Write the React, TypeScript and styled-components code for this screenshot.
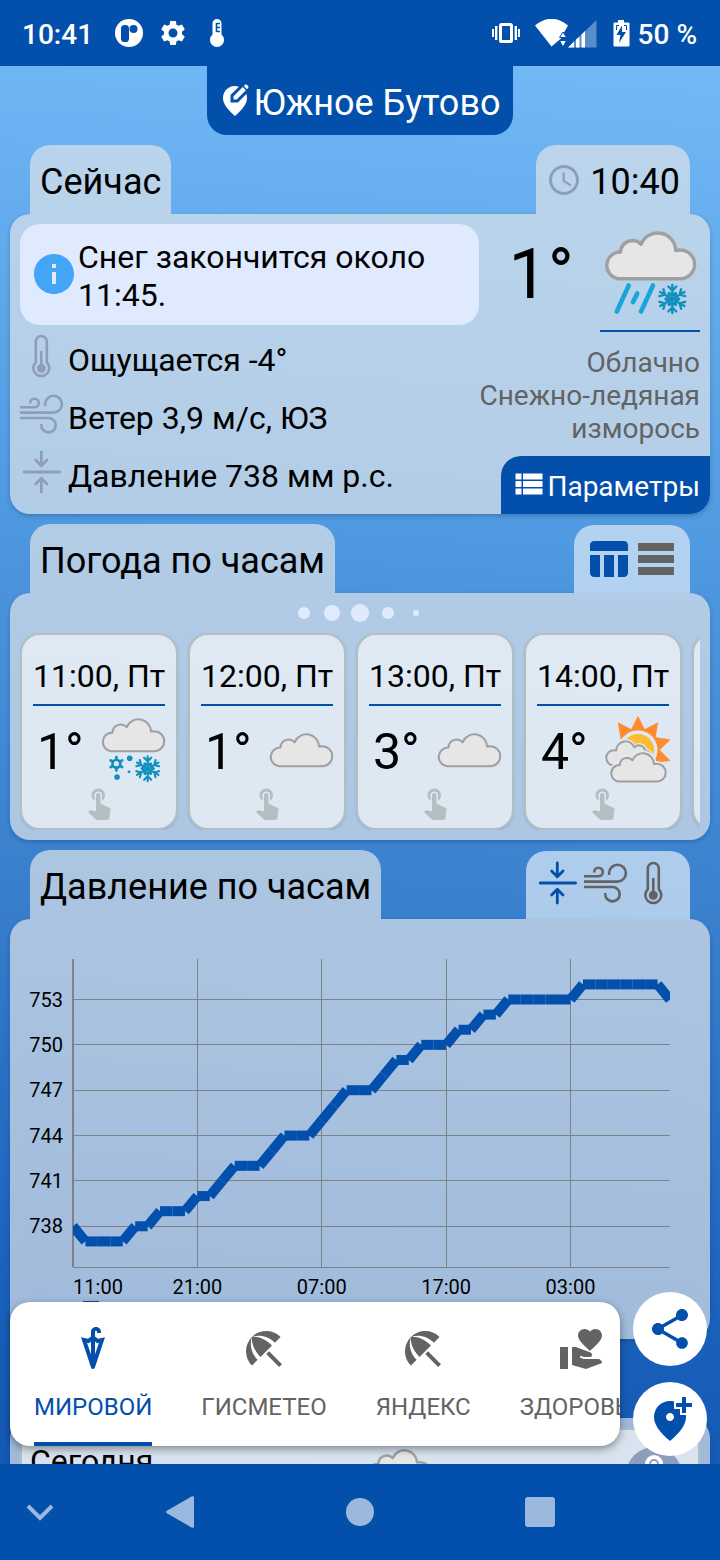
import React, { useState } from "react";
import styled, { createGlobalStyle } from "styled-components";
import {
  MdAccessTime,
  MdAddLocationAlt,
  MdBeachAccess,
  MdEditLocationAlt,
  MdInfo,
  MdSettings,
  MdShare,
  MdTableChart,
  MdTouchApp,
  MdUmbrella,
  MdViewList,
  MdVolunteerActivism,
} from "react-icons/md";

const color = {
  primary: "#034fac",
  card: "rgba(221, 227, 234, 0.7)",
  toggle: "rgba(215, 229, 246, 0.74)",
  inner: "rgba(250, 252, 252, 0.62)",
  notice: "#dfeaff",
  info: "#42a5f5",
  muted: "#8f9dbd",
  grey: "#636363",
  line: "#7d8287",
  nav: "#9bb9de",
};

const GlobalStyle = createGlobalStyle`
  *, *::before, *::after { box-sizing: border-box; }
  html, body { margin: 0; height: 100%; }
  body { font-family: Roboto, "Noto Sans", sans-serif; color: #000; background: ${color.primary}; }
  button { font: inherit; color: inherit; border: 0; padding: 0; margin: 0; background: none; cursor: pointer; }
  h2, p, ul { margin: 0; padding: 0; font-weight: 400; }
  ul { list-style: none; }
  svg { display: block; flex-shrink: 0; }
`;

/* ---------- page frame ---------- */

const Screen = styled.div`
  height: 100vh;
  display: flex;
  flex-direction: column;
  overflow: hidden;
`;

const StatusBar = styled.header`
  flex: none;
  height: 66px;
  padding: 2px 23px 0 22px;
  display: flex;
  align-items: center;
  justify-content: space-between;
  background: ${color.primary};
  color: #fff;
  font-size: 28px;
  font-weight: 500;
`;

const StatusGroup = styled.div<{ $gap: number }>`
  display: flex;
  align-items: center;
  gap: ${(p) => p.$gap}px;
`;

const Viewport = styled.div`
  position: relative;
  flex: 1;
  min-height: 0;
  overflow: hidden;
  background: linear-gradient(184deg, #72b9f6 0%, #4f99e0 34%, #3a81ce 58%, #1960bb 88%, #1459b2 100%);
`;

const Content = styled.main`
  display: flex;
  flex-direction: column;
  align-items: stretch;
  gap: 10px;
  padding: 0 10px;
`;

const LocationButton = styled.button`
  align-self: center;
  height: 69px;
  padding: 4px 12px 0 10px;
  display: flex;
  align-items: center;
  border-radius: 0 0 20px 20px;
  background: ${color.primary};
  color: #fff;
  font-size: 36px;

  svg {
    margin-bottom: 4px;
  }
`;

/* ---------- sections ---------- */

const SectionHead = styled.div`
  display: flex;
  justify-content: space-between;
  align-items: flex-end;
  padding: 0 20px;
`;

const SectionTitle = styled.h2`
  height: 69px;
  padding: 4px 10px 0;
  display: flex;
  align-items: center;
  border-radius: 20px 20px 0 0;
  background: ${color.card};
  font-size: 36px;
`;

const TimeTab = styled(SectionTitle).attrs({ as: "div" })`
  gap: 8px;

  svg {
    margin-bottom: 4px;
  }
`;

const ToggleTab = styled.div`
  height: 68px;
  padding: 10px;
  display: flex;
  border-radius: 20px 20px 0 0;
  background: ${color.toggle};
`;

const ToggleButton = styled.button<{ $active: boolean }>`
  display: flex;
  align-items: flex-start;
  width: 48px;
  height: 48px;
  color: ${(p) => (p.$active ? color.primary : color.grey)};
`;

const Card = styled.div`
  border-radius: 20px;
  background: ${color.card};
  box-shadow: 0 2px 4px rgba(20, 50, 90, 0.3);
`;

/* ---------- current weather ---------- */

const NowCard = styled(Card)`
  display: flex;
  justify-content: space-between;
  min-height: 300px;
`;

const NowLeft = styled.div`
  width: 460px;
  margin: 10px 0 0 10px;
`;

const Notice = styled.p`
  min-height: 101px;
  padding: 2px 10px 0;
  display: flex;
  align-items: center;
  border-radius: 20px;
  background: ${color.notice};
  font-size: 32px;
  line-height: 38px;

  svg {
    margin-bottom: 4px;
    color: ${color.info};
  }
`;

const FactRow = styled.li`
  height: 58px;
  padding-top: 9px;
  display: flex;
  gap: 4px;
  color: ${color.muted};
  font-size: 32px;
  line-height: 52px;

  span {
    color: #000;
  }
`;

const NowRight = styled.div`
  flex: 1;
  display: flex;
  flex-direction: column;
  align-items: flex-end;
`;

const NowTemp = styled.div`
  display: flex;
  gap: 26px;
  padding: 10px 10px 0 0;
  font-size: 70px;
  line-height: 100px;
`;

const NowIcon = styled.div`
  height: 108px;
  border-bottom: 2px solid ${color.primary};
`;

const NowText = styled.p`
  flex: 1;
  padding: 14px 10px 0 0;
  text-align: right;
  color: ${color.grey};
  font-size: 28px;
  line-height: 33px;
  white-space: pre;
`;

const ParamsButton = styled.button`
  height: 58px;
  padding: 2px 10px 0;
  display: flex;
  align-items: center;
  border-radius: 20px 0 20px 0;
  background: ${color.primary};
  color: #fff;
  font-size: 28px;

  svg {
    margin-bottom: 4px;
  }
`;

/* ---------- hourly weather ---------- */

const HoursCard = styled(Card)`
  display: flex;
  flex-direction: column;
  gap: 10px;
  padding: 10px;
`;

const HourList = styled.ul`
  display: flex;
  gap: 10px;
  overflow: hidden;
`;

const HourCard = styled.button`
  width: 158px;
  height: 197px;
  padding: 20px 11px 0;
  display: flex;
  flex-direction: column;
  align-items: center;
  border: 2px solid #b1bec2;
  border-radius: 20px;
  background: ${color.inner};
  box-shadow: 0 1px 2px rgba(20, 50, 90, 0.2);
  color: #000;
`;

const HourTime = styled.span`
  width: 100%;
  height: 51px;
  border-bottom: 2px solid ${color.primary};
  font-size: 32px;
  line-height: 42px;
  white-space: nowrap;
`;

const HourTemp = styled.span`
  align-self: stretch;
  height: 78px;
  padding-left: 4px;
  display: flex;
  justify-content: space-between;
  font-size: 50px;
  line-height: 92px;

  svg {
    margin: 7px -3px 0 0;
  }
`;

const TouchIcon = styled(MdTouchApp)`
  color: #b3bfc3;
`;

/* ---------- chart ---------- */

const ChartCard = styled(Card)`
  padding: 10px;

  svg {
    width: 100%;
    height: auto;
  }
  text {
    font-size: 20px;
  }
`;

/* ---------- daily weather ---------- */

const DayCard = styled(Card)`
  padding: 10px;
`;

const DayRow = styled.div`
  display: grid;
  grid-template-columns: 21fr 20fr;
  padding: 14px 16px 20px 8px;
  border: 2px solid #b1bec2;
  border-radius: 4px;
  background: ${color.inner};
  font-size: 32px;
  line-height: 34px;
`;

const DayIcons = styled.div`
  display: flex;
  align-items: center;
  justify-content: space-between;
`;

/* ---------- floating dock ---------- */

const Dock = styled.nav`
  position: absolute;
  left: 10px;
  right: 100px;
  bottom: 18px;
  height: 144px;
  display: flex;
  gap: 49px;
  padding: 0 24px;
  overflow: hidden;
  border-radius: 20px;
  background: #fff;
  box-shadow: 0 3px 8px rgba(0, 0, 0, 0.4);
`;

const DockTab = styled.button<{ $active: boolean }>`
  flex: none;
  padding: 23px 0 0;
  display: flex;
  flex-direction: column;
  align-items: center;
  gap: 20px;
  border-bottom: 4px solid ${(p) => (p.$active ? color.primary : "transparent")};
  color: ${(p) => (p.$active ? color.primary : color.grey)};
  font-size: 24px;
  line-height: 28px;
`;

const Fabs = styled.div`
  position: absolute;
  right: 13px;
  bottom: 8px;
  display: flex;
  flex-direction: column;
  gap: 16px;
`;

const Fab = styled.button`
  width: 74px;
  height: 74px;
  display: flex;
  align-items: center;
  justify-content: center;
  border-radius: 50%;
  background: #fff;
  color: ${color.primary};
`;

const SystemNav = styled.footer`
  flex: none;
  height: 96px;
  display: grid;
  grid-template-columns: 2fr 5fr 4fr 5fr 2fr;
  background: ${color.primary};
  color: ${color.nav};

  button {
    display: flex;
    align-items: center;
    justify-content: center;
  }
`;

/* ---------- drawings ---------- */

const CLOUD =
  "M18.6 54.7A13.4 13.4 0 0 1 20.600 28A11.8 11.8 0 0 1 41 20.3A18 18 0 0 1 75.700 26.500A14.4 14.4 0 0 1 80.300 26A14.35 14.35 0 0 1 80.300 54.700Z";

const Cloud = ({ transform, width = 3 }: { transform?: string; width?: number }) => (
  <path d={CLOUD} transform={transform} fill="#e6e6e6" stroke="#a0a0a2" strokeWidth={width} strokeLinejoin="round" />
);

const Snowflake = ({ x, y, r }: { x: number; y: number; r: number }) => (
  <g transform={`translate(${x} ${y}) scale(${r / 15})`} stroke="#0f90be" strokeWidth="2.4" strokeLinecap="round" fill="none">
    {[0, 60, 120, 180, 240, 300].map((a) => (
      <path key={a} transform={`rotate(${a})`} d="M0 0V-14M-4 -12.5L0 -8.5L4 -12.5M-3 -6L0 -3L3 -6" />
    ))}
  </g>
);

type Sky = "sleet" | "snow" | "cloud" | "partly";

const SkyIcon = ({ kind, size }: { kind: Sky; size: number }) => (
  <svg width={size} height={size} viewBox="0 0 100 100" aria-hidden="true">
    {kind === "sleet" && (
      <>
        <Cloud width={3.4} />
        <g stroke="#1ba3dc" strokeWidth="4.6" strokeLinecap="round">
          <path d="M28.7 61.5L16.8 87.5M37.3 69.5L33 78M53 61.5L41 87.5" />
        </g>
        <Snowflake x={72.3} y={75} r={15} />
      </>
    )}
    {kind === "snow" && (
      <>
        <Cloud />
        <Snowflake x={71} y={79.6} r={19} />
        <g fill="#0f90be">
          <circle cx="45.3" cy="64.7" r="4" />
          <circle cx="44.3" cy="84" r="2" />
          <circle cx="27.2" cy="91.4" r="4" />
        </g>
        <g transform="translate(26.3 72.4)" stroke="#0f90be" strokeWidth="3.8" strokeLinecap="round" fill="none">
          <circle r="5.6" />
          {[30, 90, 150, 210, 270, 330].map((a) => (
            <path key={a} transform={`rotate(${a})`} d="M6 0H9.6" />
          ))}
        </g>
      </>
    )}
    {kind === "cloud" && <Cloud transform="translate(0 21.4)" />}
    {kind === "partly" && (
      <>
        <g transform="translate(51.4 52.9)">
          {[-36, 0, 36, 72, 108].map((a) => (
            <path key={a} transform={`rotate(${a})`} d="M-11.5 -26Q0 -30 11.5 -26L0 -49Z" fill="#ff8b30" />
          ))}
          <circle r="26" fill="#e0e9f2" />
          <circle r="23" fill="#fdbb2d" />
        </g>
        <path d={CLOUD} transform="translate(77 33.8) scale(-.75 .75)" fill="none" stroke="#e0e9f2" strokeWidth="9" />
        <Cloud transform="translate(77 33.8) scale(-.75 .75)" width={3.8} />
        <path d={CLOUD} transform="translate(7.2 49.5) scale(.885)" fill="none" stroke="#e0e9f2" strokeWidth="9" />
        <Cloud transform="translate(7.2 49.5) scale(.885)" width={3.4} />
      </>
    )}
  </svg>
);

type Metric = "pressure" | "wind" | "temperature";

const MetricIcon = ({ kind }: { kind: Metric }) => (
  <svg
    width="44"
    height="44"
    viewBox="1 0 44 44"
    fill="none"
    stroke="currentColor"
    strokeLinecap="round"
    strokeLinejoin="round"
    aria-hidden="true"
  >
    {kind === "temperature" && (
      <g strokeWidth="2.6">
        <path d="M16.8 28.2V7.5a5.5 5.5 0 0 1 11 0V28.2a8 8 0 1 1-11 0Z" />
        <path d="M22.3 18V34" />
        <circle cx="22.3" cy="34.2" r="3.2" fill="currentColor" />
      </g>
    )}
    {kind === "wind" && (
      <g strokeWidth="2.6" strokeLinecap="butt">
        <path d="M1 15.3H15.5A4.3 4.3 0 1 0 11.2 11V11.5" />
        <path d="M1 20.6H34.5A8.4 8.4 0 1 0 26.1 12.2V14" />
        <path d="M1 26H29.5A7.2 7.2 0 1 1 22.3 33.2V32" />
      </g>
    )}
    {kind === "pressure" && (
      <g strokeWidth="2.8">
        <path d="M5.2 22H40.6" />
        <path d="M22.3 2V15.6M16.6 10L22.3 15.8L28 10" />
        <path d="M22.3 42V28.5M16.6 34L22.3 28.3L28 34" />
      </g>
    )}
  </svg>
);

const RowsIcon = () => (
  <svg width="48" height="48" viewBox="0 0 48 48" fill="currentColor" aria-hidden="true">
    <path d="M6 8h36v8H6zM6 20h36v8H6zM6 32h36v8H6z" />
  </svg>
);

const PagerDots = () => (
  <svg width="100%" height="20" viewBox="0 0 140 20" fill={color.notice} aria-hidden="true">
    <circle cx="14" cy="10" r="6" />
    <circle cx="42" cy="10" r="8" />
    <circle cx="70" cy="10" r="9" />
    <circle cx="98" cy="10" r="6" />
    <circle cx="126" cy="10" r="3" />
  </svg>
);

/* ---------- pressure chart ---------- */

const PRESSURE = [
  738, 737, 737, 737, 737, 738, 738, 739, 739, 739, 740, 740, 741, 742, 742, 742, 743, 744, 744, 744, 745, 746, 747,
  747, 747, 748, 749, 749, 750, 750, 750, 751, 751, 752, 752, 753, 753, 753, 753, 753, 753, 754, 754, 754, 754, 754,
  754, 754, 753,
];
const TICKS = [753, 750, 747, 744, 741, 738];
const HOURS = ["11:00", "21:00", "07:00", "17:00", "03:00"];

const px = (i: number) => 53 + (i * 597) / 48;
const py = (v: number) => 70.5 + (753 - v) * 15.12;

const PressureChart = () => (
  <svg viewBox="0 0 680 400" role="img" aria-label="Давление по часам">
    <defs>
      <clipPath id="plot">
        <rect x="53" y="30" width="597" height="309" />
      </clipPath>
    </defs>
    <g stroke={color.line} shapeRendering="crispEdges">
      {TICKS.map((v) => (
        <path key={v} d={`M53 ${py(v)}H650`} />
      ))}
      {[1, 2, 3, 4].map((n) => (
        <path key={n} d={`M${px(n * 10)} 30V338`} />
      ))}
      <path d="M53 338.5H650" />
      <path d="M53 30V338" strokeWidth="2" />
    </g>
    <g stroke={color.primary} strokeWidth="10" clipPath="url(#plot)">
      {PRESSURE.slice(1).map((v, i) => (
        <path key={i} d={`M${px(i)} ${py(PRESSURE[i])}L${px(i + 1)} ${py(v)}`} />
      ))}
    </g>
    <g textAnchor="end">
      {TICKS.map((v) => (
        <text key={v} x="43" y={py(v) + 7}>
          {v}
        </text>
      ))}
    </g>
    <g textAnchor="middle">
      {HOURS.map((h, n) => (
        <text key={h} x={n === 0 ? 78 : px(n * 10)} y="365">
          {h}
        </text>
      ))}
    </g>
    <rect x="63" y="372" width="16" height="16" fill={color.primary} />
  </svg>
);

/* ---------- data ---------- */

const HOURLY: { time: string; temp: string; sky: Sky }[] = [
  { time: "11:00, Пт", temp: "1°", sky: "snow" },
  { time: "12:00, Пт", temp: "1°", sky: "cloud" },
  { time: "13:00, Пт", temp: "3°", sky: "cloud" },
  { time: "14:00, Пт", temp: "4°", sky: "partly" },
  { time: "15:00, Пт", temp: "4°", sky: "cloud" },
];

const FACTS: { kind: Metric; text: string }[] = [
  { kind: "temperature", text: "Ощущается -4°" },
  { kind: "wind", text: "Ветер 3,9 м/с, ЮЗ" },
  { kind: "pressure", text: "Давление 738 мм р.с." },
];

const METRICS: { kind: Metric; label: string }[] = [
  { kind: "pressure", label: "Давление" },
  { kind: "wind", label: "Ветер" },
  { kind: "temperature", label: "Температура" },
];

const SOURCES = [
  { name: "МИРОВОЙ", Icon: MdUmbrella },
  { name: "ГИСМЕТЕО", Icon: MdBeachAccess },
  { name: "ЯНДЕКС", Icon: MdBeachAccess },
  { name: "ЗДОРОВЬЕ", Icon: MdVolunteerActivism },
];

export default function App() {
  const [source, setSource] = useState("МИРОВОЙ");
  const [metric, setMetric] = useState<Metric>("pressure");
  const [table, setTable] = useState(true);

  return (
    <>
      <GlobalStyle />
      <Screen>
        <StatusBar>
          <StatusGroup $gap={16}>
            <span>10:41</span>
            <svg width="120" height="30" viewBox="0 0 120 30" fill="currentColor" aria-hidden="true">
              <circle cx="20" cy="14" r="14" />
              <rect x="12" y="6" width="8" height="17" rx="3.6" fill={color.primary} />
              <circle cx="24.5" cy="10" r="4" fill={color.primary} />
              <MdSettings x="49" y="-1" size={30} />
              <path d="M103.5 4.5a4.5 4.5 0 0 1 9 0V15.600a7 7 0 1 1-9 0Z" />
              <path d="M107.500 4V13M107.500 4.500H111M107.500 8.500H111M107.500 12.500H111" stroke={color.primary} strokeWidth="1.6" />
            </svg>
          </StatusGroup>
          <StatusGroup $gap={8}>
            <svg width="140" height="30" viewBox="0 0 140 30" fill="currentColor" aria-hidden="true">
              <path
                fillRule="evenodd"
                d="M11.5 4h9a2.5 2.5 0 0 1 2.5 2.5v15a2.5 2.5 0 0 1-2.5 2.5h-9A2.5 2.5 0 0 1 9 21.5v-15A2.5 2.5 0 0 1 11.5 4zM12 7v14h8V7z"
              />
              <path d="M5 7h2.400v14H5zM2 10h2v8H2zM24.600 7H27v14h-2.400zM28 10h2v8h-2z" />
              <path d="M45 6.5Q61.500 -7 78 6.5L74 13.5L71 19.5L61.5 27.5Z" />
              <path d="M73 13L69.5 18.5H76.5ZM73 28L69.5 21.5H76.5Z" stroke={color.primary} strokeWidth="1" />
              <path d="M78 28.500L106.500 1V28.500Z" opacity=".35" />
              <path d="M78 28.5L84 22.5V28.5ZM86 20.5L89.500 17.5V28.5H86ZM91.5 15.5L95 12V28.5H91.5Z" />
              <path d="M128 1h6v2.500h4.500a1 1 0 0 1 1 1v22a1 1 0 0 1-1 1h-14a1 1 0 0 1-1-1V4.500a1 1 0 0 1 1-1h3.500Z" />
              <path d="M132 6.500L126.500 16H130.500L129 24L136 13H132Z" fill={color.primary} />
              <path d="M126.500 11V6.500H129M134 6.500H136.500V11" fill="none" stroke={color.primary} strokeWidth="1" />
            </svg>
            <span>50 %</span>
          </StatusGroup>
        </StatusBar>

        <Viewport>
          <Content>
            <LocationButton>
              <MdEditLocationAlt size={36} />
              Южное Бутово
            </LocationButton>

            <section>
              <SectionHead>
                <SectionTitle>Сейчас</SectionTitle>
                <TimeTab>
                  <MdAccessTime size={36} color={color.muted} />
                  10:40
                </TimeTab>
              </SectionHead>
              <NowCard>
                <NowLeft>
                  <Notice>
                    <MdInfo size={48} />
                    Снег закончится около 11:45.
                  </Notice>
                  <ul>
                    {FACTS.map((f) => (
                      <FactRow key={f.kind}>
                        <MetricIcon kind={f.kind} />
                        <span>{f.text}</span>
                      </FactRow>
                    ))}
                  </ul>
                </NowLeft>
                <NowRight>
                  <NowTemp>
                    1°
                    <NowIcon>
                      <SkyIcon kind="sleet" size={100} />
                    </NowIcon>
                  </NowTemp>
                  <NowText>{"Облачно\nСнежно-ледяная\nизморось"}</NowText>
                  <ParamsButton>
                    <MdViewList size={36} />
                    Параметры
                  </ParamsButton>
                </NowRight>
              </NowCard>
            </section>

            <section>
              <SectionHead>
                <SectionTitle>Погода по часам</SectionTitle>
                <ToggleTab>
                  <ToggleButton $active={table} aria-label="Таблица" onClick={() => setTable(true)}>
                    <MdTableChart size={48} />
                  </ToggleButton>
                  <ToggleButton $active={!table} aria-label="Список" onClick={() => setTable(false)}>
                    <RowsIcon />
                  </ToggleButton>
                </ToggleTab>
              </SectionHead>
              <HoursCard>
                <PagerDots />
                <HourList>
                  {HOURLY.map((h) => (
                    <li key={h.time}>
                      <HourCard>
                        <HourTime>{h.time}</HourTime>
                        <HourTemp>
                          {h.temp}
                          <SkyIcon kind={h.sky} size={70} />
                        </HourTemp>
                        <TouchIcon size={36} />
                      </HourCard>
                    </li>
                  ))}
                </HourList>
              </HoursCard>
            </section>

            <section>
              <SectionHead>
                <SectionTitle>Давление по часам</SectionTitle>
                <ToggleTab>
                  {METRICS.map((m) => (
                    <ToggleButton
                      key={m.kind}
                      $active={metric === m.kind}
                      aria-label={m.label}
                      onClick={() => setMetric(m.kind)}
                    >
                      <MetricIcon kind={m.kind} />
                    </ToggleButton>
                  ))}
                </ToggleTab>
              </SectionHead>
              <ChartCard>
                <PressureChart />
              </ChartCard>
            </section>

            <section>
              <SectionHead>
                <SectionTitle>Погода по дням</SectionTitle>
              </SectionHead>
              <DayCard>
                <DayRow>
                  Сегодня
                  <DayIcons>
                    <SkyIcon kind="sleet" size={70} />
                    <svg width="56" height="64" viewBox="0 0 56 64" aria-hidden="true">
                      <circle cx="28" cy="28" r="28" fill={color.muted} />
                      <circle cx="28" cy="17" r="9" fill="#fff" />
                      <circle cx="28" cy="17" r="4" fill="none" stroke={color.muted} strokeWidth="2" />
                    </svg>
                  </DayIcons>
                </DayRow>
              </DayCard>
            </section>
          </Content>

          <Dock>
            {SOURCES.map(({ name, Icon }) => (
              <DockTab key={name} $active={source === name} onClick={() => setSource(name)}>
                <Icon size={48} />
                {name}
              </DockTab>
            ))}
          </Dock>
          <Fabs>
            <Fab aria-label="Поделиться">
              <MdShare size={48} />
            </Fab>
            <Fab aria-label="Добавить место">
              <MdAddLocationAlt size={48} />
            </Fab>
          </Fabs>
        </Viewport>

        <SystemNav>
          <button aria-label="Скрыть">
            <svg width="28" height="18" viewBox="0 0 28 18" fill="none" stroke="currentColor" strokeWidth="4">
              <path d="M2 3L14 15L26 3" />
            </svg>
          </button>
          <button aria-label="Назад">
            <svg width="32" height="32" viewBox="0 0 32 32" fill="currentColor">
              <path d="M28 .3Q30 -.3 30 1.3V30.7Q30 32.3 28 31.7L2.8 17.2Q1.4 16 2.8 14.8Z" />
            </svg>
          </button>
          <button aria-label="Домой">
            <svg width="28" height="28" viewBox="0 0 28 28" fill="currentColor">
              <circle cx="14" cy="14" r="14" />
            </svg>
          </button>
          <button aria-label="Недавние">
            <svg width="30" height="30" viewBox="0 0 30 30" fill="currentColor">
              <rect width="30" height="30" rx="3" />
            </svg>
          </button>
        </SystemNav>
      </Screen>
    </>
  );
}
